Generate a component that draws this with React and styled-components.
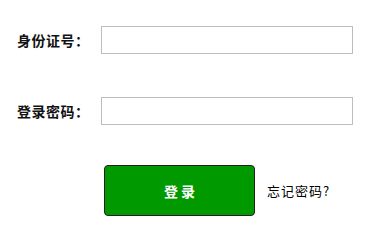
import React from "react";
import styled, { createGlobalStyle } from "styled-components";

const GlobalStyle = createGlobalStyle`
  body {
    margin: 0;
    background: #fff;
    font-family: "Noto Sans CJK SC", "Liberation Sans", sans-serif;
  }
`;

const App = () => {
  return (
    <>
      <GlobalStyle />
      <Form>
        <Row>
          <Label>身份证号：</Label>
          <Input type="text" />
        </Row>
        <Row>
          <Label>登录密码：</Label>
          <Input type="password" />
        </Row>
        <Actions>
          <LoginButton>登 录</LoginButton>
          <Forgot>忘记密码?</Forgot>
        </Actions>
      </Form>
    </>
  );
};

export default App;

const Form = styled.div`
  padding: 26px 0 0 17px;
  display: flex;
  flex-direction: column;
`;

const Row = styled.div`
  display: flex;
  align-items: center;
  height: 28px;
  margin-bottom: 43px;
  &:nth-of-type(2) {
    margin-bottom: 40px;
  }
`;

const Label = styled.label`
  width: 84px;
  font-size: 14px;
  letter-spacing: 0.5px;
  font-weight: bold;
  color: #111;
  white-space: nowrap;
`;

const Input = styled.input`
  box-sizing: border-box;
  width: 252px;
  height: 28px;
  border: 1px solid #bdbdbd;
  background: #fff;
  padding: 0 6px;
  outline: none;
`;

const Actions = styled.div`
  display: flex;
  align-items: center;
  padding-left: 87px;
  gap: 12px;
`;

const LoginButton = styled.button`
  box-sizing: border-box;
  width: 151px;
  height: 51px;
  background: #009900;
  border: 1px solid #222;
  border-radius: 4px;
  color: #fff;
  font-family: "Noto Sans CJK SC", sans-serif;
  font-size: 14px;
  font-weight: bold;
  cursor: pointer;
`;

const Forgot = styled.a`
  font-size: 13px;
  letter-spacing: 1px;
  color: #000;
  cursor: pointer;
`;
